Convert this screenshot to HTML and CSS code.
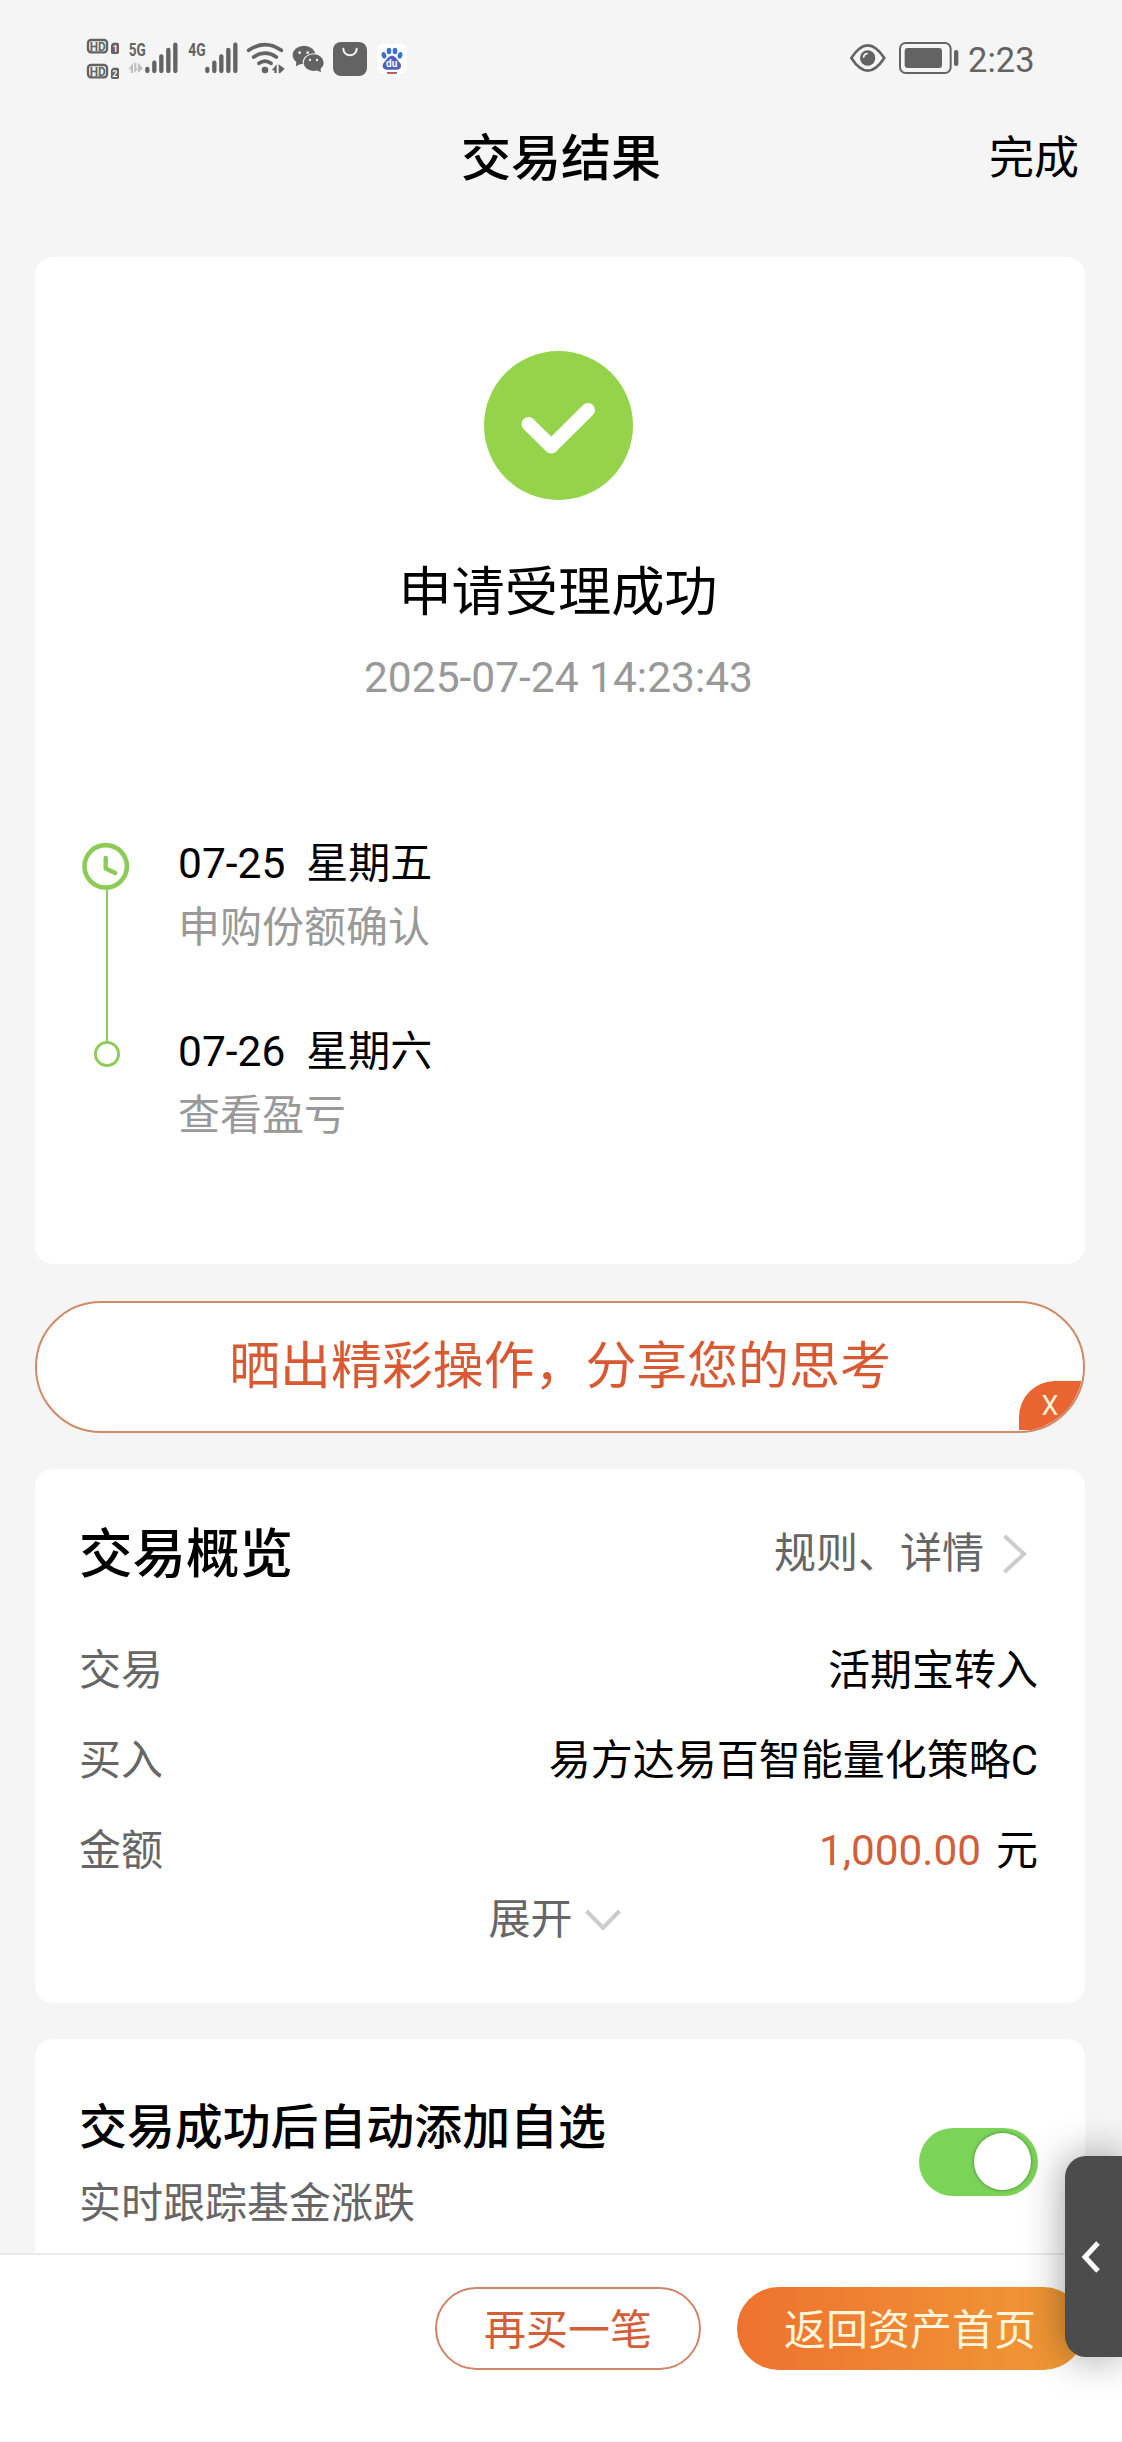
FILE: index.html
```html
<!DOCTYPE html>
<html lang="zh-CN">
<head>
  <meta charset="UTF-8" />
  <meta name="viewport" content="width=device-width, initial-scale=1.0"/>
  <title>交易结果</title>
  <link rel="stylesheet" href="styles.css">
</head>
<body>
  <div class="status-bar">
    <div class="status-left">
      <!-- HD 1 / HD 2 -->
      <svg width="40" height="80" viewBox="48 0 120 240">
        <g fill="none" stroke="#636363" stroke-width="7">
          <rect x="54" y="60" width="57" height="37" rx="9"/>
          <rect x="54" y="135" width="57" height="37" rx="9"/>
        </g>
        <g fill="#636363">
          <path d="M129 68h13q5 0 5 5v24q0 5-5 5h-14q-5 0-5-5V75z"/>
          <path d="M129 143h13q5 0 5 5v24q0 5-5 5h-14q-5 0-5-5v-22z"/>
        </g>
        <g class="hd-text">
          <text x="59" y="92" textLength="48" lengthAdjust="spacingAndGlyphs">HD</text>
          <text x="59" y="167" textLength="48" lengthAdjust="spacingAndGlyphs">HD</text>
        </g>
        <g class="sim-text">
          <text x="128" y="97">1</text>
          <text x="127" y="172">2</text>
        </g>
      </svg>
      <!-- 5G signal -->
      <svg width="60" height="80" viewBox="168 0 180 240">
        <text class="net-text" x="176" y="108" textLength="51" lengthAdjust="spacingAndGlyphs">5G</text>
        <g fill="#bdbdbd">
          <path d="M176 148l13-20v31h-6v-11zM193 128h6v18h5l-11 13zM204 128l14 17-14 14z"/>
        </g>
        <g stroke="#636363" stroke-width="13" stroke-linecap="round">
          <path d="M232 147v6M253 128v25M274 109v44M295 90v63M316 74v79"/>
        </g>
      </svg>
      <!-- 4G signal -->
      <svg width="60" height="80" viewBox="348 0 180 240">
        <text class="net-text" x="355" y="108" textLength="52" lengthAdjust="spacingAndGlyphs">4G</text>
        <g stroke="#636363" stroke-width="13" stroke-linecap="round">
          <path d="M412 147v6M433 128v25M454 109v44M475 90v63M496 74v79"/>
        </g>
      </svg>
      <!-- wifi -->
      <svg width="44" height="80" viewBox="528 0 132 240">
        <g fill="none" stroke="#636363" stroke-width="11" stroke-linecap="round">
          <path d="M536 91q49-34 98 0M551 111q34-23 68 0M567 130q18-13 36 0"/>
        </g>
        <circle cx="585" cy="150" r="10" fill="#636363"/>
        <path fill="#636363" d="M605 151l15-18v26h-7v-8zM626 133l18 13-14 14h-4z"/>
      </svg>
      <!-- wechat -->
      <svg width="40" height="80" viewBox="660 0 120 240">
        <ellipse cx="702" cy="105" rx="34" ry="28" fill="#636363"/>
        <path fill="#636363" d="M679 123l-1 16 19-9z"/>
        <ellipse cx="731" cy="128" rx="33" ry="28" fill="#f5f5f5"/>
        <ellipse cx="731" cy="128" rx="30" ry="25" fill="#636363"/>
        <path fill="#636363" d="M751 143l2 14-16-8z"/>
        <g fill="#f5f5f5">
          <circle cx="689" cy="98" r="4"/><circle cx="713" cy="98" r="4"/>
          <circle cx="720" cy="120" r="3.5"/><circle cx="741" cy="120" r="3.5"/>
        </g>
      </svg>
      <!-- app store bag -->
      <svg width="42" height="80" viewBox="780 0 126 240">
        <rect x="789" y="66" width="102" height="102" rx="24" fill="#636363"/>
        <path d="M820 86a20 20 0 0 0 40 0" fill="none" stroke="#f5f5f5" stroke-width="6" stroke-linecap="round"/>
      </svg>
      <!-- baidu -->
      <svg width="38" height="80" viewBox="906 0 114 240">
        <rect x="921" y="72" width="90" height="90" rx="18" fill="#fff"/>
        <g fill="#3a70d0">
          <ellipse cx="942" cy="106" rx="7" ry="10" transform="rotate(-15 942 106)"/>
          <ellipse cx="957" cy="93" rx="7" ry="10"/>
          <ellipse cx="975" cy="93" rx="7" ry="10"/>
          <ellipse cx="990" cy="106" rx="7" ry="10" transform="rotate(15 990 106)"/>
        </g>
        <path fill="#5260bd" d="M966 107c12 0 14 12 22 19 9 9 6 23-8 23h-29c-14 0-17-14-8-23 8-7 11-19 23-19z"/>
        <text class="du-text" x="948" y="142">du</text>
        <path fill="#5560b8" d="M951 156h30v5h-30z"/>
        <path fill="#d0504c" d="M954 156h22v5h-22z"/>
      </svg>
    </div>
    <div class="status-right">
      <svg width="36" height="80" viewBox="90 0 108 240">
        <path d="M94 114q49-76 99 0q-50 76-99 0z" fill="none" stroke="#636363" stroke-width="8" stroke-linejoin="round"/>
        <circle cx="143" cy="114" r="23" fill="#636363"/>
        <path d="M131 111q1-9 10-10" fill="none" stroke="#f5f5f5" stroke-width="5" stroke-linecap="round"/>
      </svg>
      <svg width="60" height="80" viewBox="237 0 180 240">
        <rect x="240" y="69" width="152" height="90" rx="17" fill="none" stroke="#636363" stroke-width="6"/>
        <rect x="254" y="84" width="112" height="60" rx="9" fill="#636363"/>
        <rect x="402" y="90" width="13" height="48" rx="6" fill="#636363"/>
      </svg>
      <span class="clock">2:23</span>
    </div>
  </div>

  <header class="nav">
    <h1>交易结果</h1>
    <a class="done">完成</a>
  </header>

  <main>
    <section class="card result">
      <svg class="success-icon" width="149" height="149" viewBox="0 0 149 149">
        <circle cx="74.5" cy="74.5" r="74.5" fill="#94d34a"/>
        <path d="M44.5 73L67.3 95.5L104 59" fill="none" stroke="#fff" stroke-width="14" stroke-linecap="round" stroke-linejoin="round"/>
      </svg>
      <h2>申请受理成功</h2>
      <p class="time">2025-07-24 14:23:43</p>

      <div class="timeline">
        <svg width="50" height="228" viewBox="0 0 50 228" fill="none" stroke="#8ccb55">
          <path d="M25 47v153" stroke="#8fc468" stroke-width="2"/>
          <circle cx="23.7" cy="24.3" r="21.2" stroke-width="4.6"/>
          <path d="M23.7 16v10.5l9.5 4.5" stroke-width="4.4" stroke-linecap="round" stroke-linejoin="round"/>
          <circle cx="25" cy="212" r="11.6" stroke-width="2.8"/>
        </svg>
        <ul>
          <li>
            <p class="date"><span>07-25</span><span>星期五</span></p>
            <p class="desc">申购份额确认</p>
          </li>
          <li>
            <p class="date"><span>07-26</span><span>星期六</span></p>
            <p class="desc">查看盈亏</p>
          </li>
        </ul>
      </div>
    </section>

    <div class="share">
      <span>晒出精彩操作，分享您的思考</span>
      <button class="share-close">X</button>
    </div>

    <section class="card overview">
      <div class="overview-head">
        <h3>交易概览</h3>
        <a class="more">规则、详情
          <svg width="26" height="42" viewBox="0 0 26 42"><path d="M2.5 3L22 21L2.5 39" fill="none" stroke="#ccc" stroke-width="4"/></svg>
        </a>
      </div>
      <div class="row"><span class="label">交易</span><span>活期宝转入</span></div>
      <div class="row"><span class="label">买入</span><span>易方达易百智能量化策略C</span></div>
      <div class="row"><span class="label">金额</span><span class="amount"><b>1,000.00</b>元</span></div>
      <a class="expand">展开
        <svg width="38" height="24" viewBox="0 0 38 24"><path d="M2.5 3L19 20L35.5 3" fill="none" stroke="#ccc" stroke-width="4"/></svg>
      </a>
    </section>

    <section class="card favorite">
      <div>
        <h4>交易成功后自动添加自选</h4>
        <p>实时跟踪基金涨跌</p>
      </div>
      <span class="switch"></span>
    </section>
  </main>

  <footer class="bottom-bar">
    <button class="btn btn-outline">再买一笔</button>
    <button class="btn btn-primary">返回资产首页</button>
  </footer>

  <div class="side-tab">
    <svg width="20" height="34" viewBox="0 0 20 34"><path d="M17 3L4 17L17 31" fill="none" stroke="#fff" stroke-width="5"/></svg>
  </div>
</body>
</html>
```
FILE: styles.css
```css
* {
  box-sizing: border-box;
  margin: 0;
  padding: 0;
  font-family: Roboto, 'Noto Sans CJK SC', sans-serif;
}
body {
  width: 1122px;
  height: 2442px;
  background: #f5f5f5;
  color: #000;
  font-size: 42px;
  line-height: 50px;
  overflow: hidden;
  position: relative;
}
svg {
  display: block;
  flex: none;
}

/* status bar */
.status-bar {
  display: flex;
  justify-content: space-between;
  height: 100px;
  padding: 20px 88px 0 86px;
}
.status-left,
.status-right {
  display: flex;
  align-items: center;
}
.status-right svg {
  margin-right: 13px;
}
.status-right svg + svg {
  margin-right: 9px;
}
.clock {
  width: 66px;
  font-size: 34.5px;
  line-height: 78px;
  color: #636363;
  white-space: nowrap;
}
.hd-text {
  font-size: 36px;
  font-weight: 700;
  fill: #636363;
}
.sim-text {
  font-size: 27px;
  font-weight: 700;
  fill: #f5f5f5;
}
.net-text {
  font-size: 57px;
  font-weight: 700;
  fill: #636363;
}
.du-text {
  font-size: 30px;
  font-weight: 700;
  fill: #fff;
}

/* title */
.nav {
  display: grid;
  grid-template-columns: 1fr auto 1fr;
  align-items: center;
  height: 118px;
  padding: 0 43px;
}
.nav h1 {
  grid-column: 2;
  font-size: 50px;
  font-weight: 500;
}
.done {
  justify-self: end;
  font-size: 45px;
}

main {
  padding: 39px 37px 0 35px;
}
.card {
  background: #fff;
  border-radius: 18px;
}

/* result */
.result {
  height: 1007px;
  padding-top: 94px;
}
.success-icon {
  margin-left: 449px;
}
.result h2 {
  margin: 61px 4px 0 0;
  font-size: 53.2px;
  font-weight: 400;
  line-height: 64px;
  text-align: center;
}
.time {
  margin: 28px 3px 0 0;
  color: #999;
  font-size: 42.5px;
  text-align: center;
}
.timeline {
  display: flex;
  gap: 46px;
  margin: 136px 0 0 47px;
}
.timeline svg {
  margin-top: 3px;
}
.timeline ul {
  list-style: none;
}
.timeline li {
  height: 188px;
}
.date {
  display: flex;
  gap: 21px;
}
.date span:first-child {
  font-size: 42.5px;
}
.desc {
  margin-top: 14px;
  color: #999;
}

/* share */
.share {
  position: relative;
  display: flex;
  align-items: center;
  justify-content: center;
  height: 132px;
  margin-top: 37px;
  border: 2px solid #d08a66;
  border-radius: 66px;
  background: #fff;
  color: #d95a32;
  font-size: 50.9px;
  overflow: hidden;
}
.share-close {
  position: absolute;
  right: 2px;
  bottom: 1px;
  width: 62px;
  height: 49px;
  border: none;
  border-radius: 36px 0 0 0;
  background: #e86430;
  color: #fff3dc;
  font-size: 27px;
}

/* overview */
.overview {
  height: 534px;
  margin-top: 36px;
  padding: 50px 47px 0 44px;
}
.overview-head {
  display: flex;
  align-items: center;
  justify-content: space-between;
  height: 72px;
  margin-bottom: 35px;
}
.overview-head h3 {
  font-size: 53.5px;
  font-weight: 500;
}
.more {
  display: flex;
  align-items: center;
  gap: 18px;
  margin: -2px 10px 0 0;
  color: #666;
}
.row {
  display: flex;
  justify-content: space-between;
  height: 90px;
  padding-top: 20px;
}
.label {
  color: #666;
}
.amount b {
  margin-right: 15px;
  color: #cf6039;
  font-size: 42.3px;
  font-weight: 400;
}
.expand {
  display: flex;
  align-items: center;
  justify-content: center;
  gap: 11px;
  height: 50px;
  margin: -1px 7px 0 0;
  color: #666;
}

/* favorite */
.favorite {
  display: flex;
  justify-content: space-between;
  height: 260px;
  margin-top: 36px;
  padding: 60px 47px 0 44px;
}
.favorite h4 {
  font-size: 47.9px;
  font-weight: 500;
  line-height: 58px;
}
.favorite p {
  margin-top: 22px;
  color: #666;
}
.switch {
  display: flex;
  width: 119px;
  height: 68px;
  margin-top: 29px;
  padding: 5px 7px 0 55px;
  border-radius: 34px;
  background: #7bd358;
}
.switch::after {
  content: "";
  width: 57px;
  height: 57px;
  border-radius: 50%;
  background: #fff;
  box-shadow: 0 0 3px 1px rgba(0,0,0,0.25);
}

/* bottom bar */
.bottom-bar {
  position: absolute;
  left: 0;
  right: 0;
  bottom: 0;
  display: flex;
  justify-content: flex-end;
  gap: 36px;
  height: 189px;
  padding: 32px 37px 0 0;
  border-top: 2px solid #ebebeb;
  border-bottom: 1px solid #f2f2f2;
  background: #fff;
}
.btn {
  height: 83px;
  padding-bottom: 5px;
  border: none;
  border-radius: 42px;
  font-size: 42px;
}
.btn-outline {
  width: 266px;
  border: 2px solid #d08468;
  background: #fff;
  color: #d35f38;
}
.btn-primary {
  width: 348px;
  padding-right: 2px;
  background: linear-gradient(to right, #ee722f, #f09a36);
  color: #fff5dc;
}

/* floating tab */
.side-tab {
  position: absolute;
  right: 0;
  top: 2156px;
  display: flex;
  align-items: center;
  width: 57px;
  height: 201px;
  padding-left: 16px;
  border-radius: 21px 0 0 21px;
  background: #4c4c4c;
  box-shadow: 0 0 40px rgba(0,0,0,0.4);
}
```
